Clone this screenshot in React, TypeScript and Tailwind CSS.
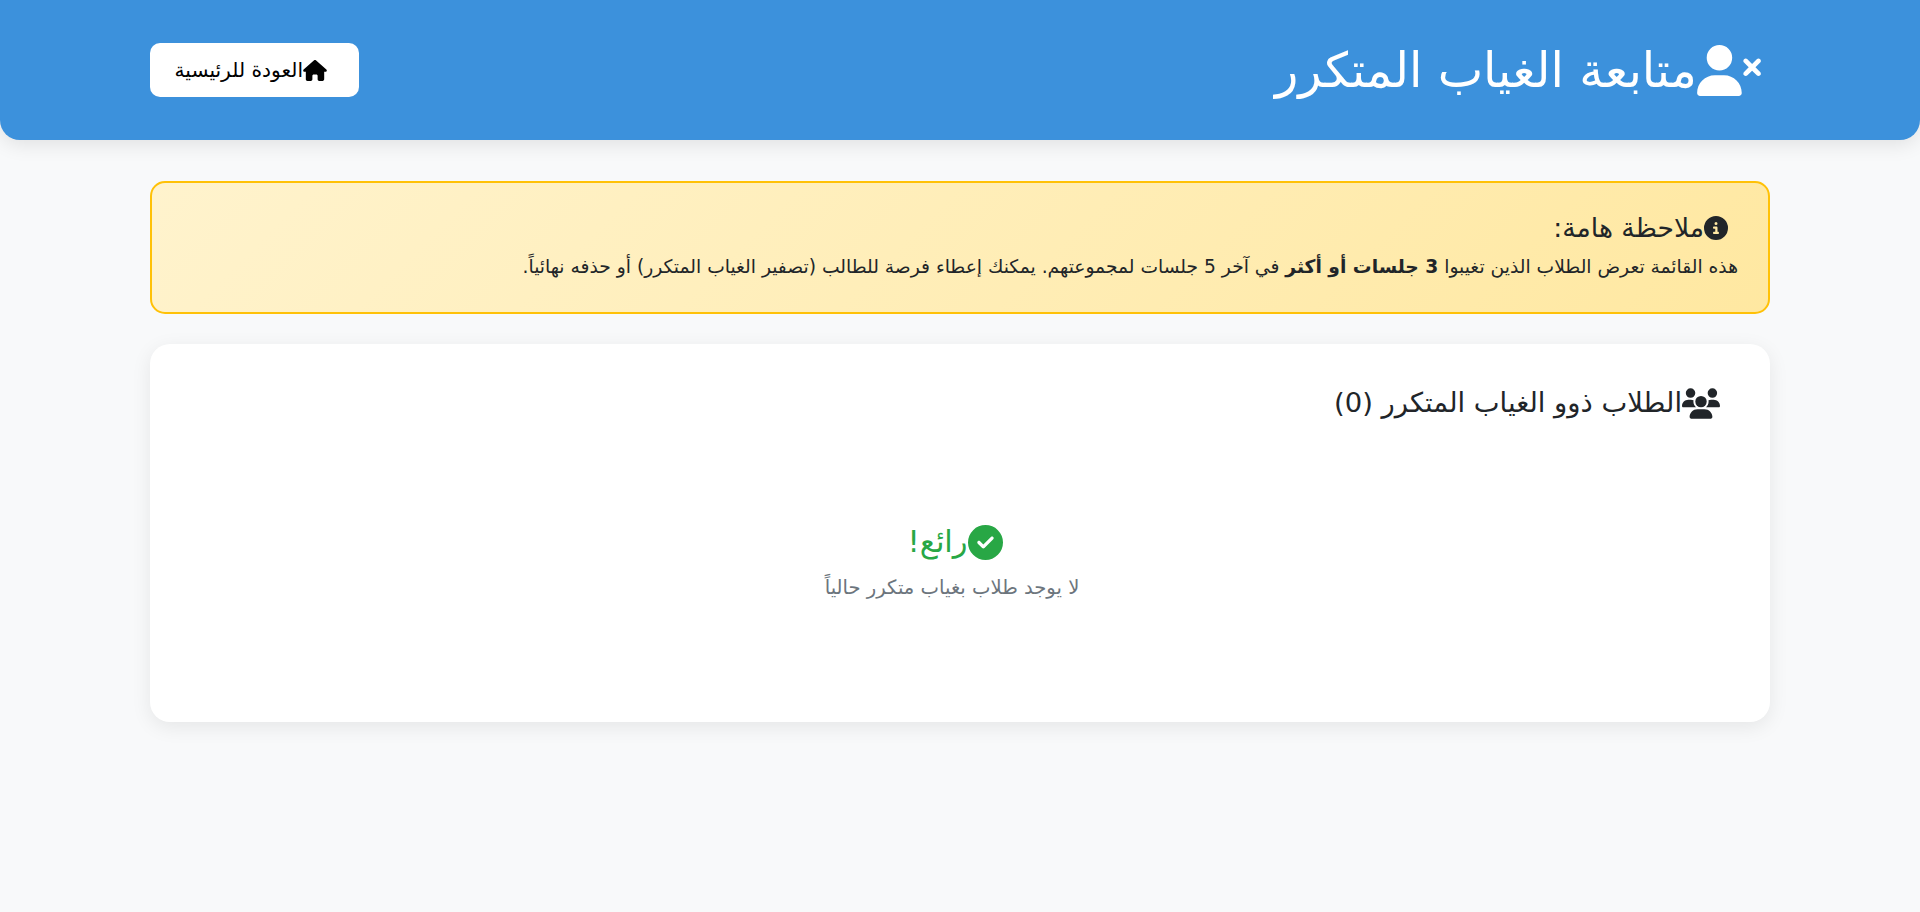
import React from 'react';
import { FaCircleCheck, FaCircleInfo, FaHouse, FaUserXmark, FaUsers } from 'react-icons/fa6';

const App: React.FC = () => {
  return (
    <div dir="rtl" className="min-h-[912px] bg-[#f8f9fa] text-[#212529] font-['DejaVu_Sans',sans-serif]">
      <header className="h-[140px] bg-[#3c91dc] rounded-b-[20px] shadow-[0_4px_20px_rgba(0,0,0,0.1)] text-white">
        <div className="mx-[150px] h-full flex items-center justify-between">
          <h1 className="flex items-center pr-[9px] text-[48.3px] leading-[58px] font-normal">
            <FaUserXmark className="w-[64px] h-[51px] shrink-0" />
            <span>متابعة الغياب المتكرر</span>
          </h1>
          <a href="#home" className="flex items-center h-[54px] w-[209px] pr-[32px] bg-white rounded-[10px] text-black text-[20.2px]">
            <FaHouse className="w-6 h-[21px] shrink-0" />
            <span>العودة للرئيسية</span>
          </a>
        </div>
      </header>

      <main className="mx-[150px] pt-[41px]">
        <section className="h-[133px] border-2 border-[#ffc107] rounded-[15px] bg-linear-135 from-[#fff3cd] to-[#ffe8a1] px-[30px] pt-[29px]">
          <h2 className="flex items-center pr-[10px] text-[26.6px] leading-[32px] font-normal">
            <FaCircleInfo className="w-6 h-6 shrink-0" />
            <span>ملاحظة هامة:</span>
          </h2>
          <p className="mt-[11px] text-[18.7px] leading-[24px]">
            هذه القائمة تعرض الطلاب الذين تغيبوا <strong>3 جلسات أو أكثر</strong> في آخر 5 جلسات لمجموعتهم. يمكنك إعطاء فرصة للطالب (تصفير الغياب المتكرر) أو حذفه نهائياً.
          </p>
        </section>

        <section className="mt-[30px] h-[378px] bg-white rounded-[20px] shadow-[0_5px_20px_rgba(0,0,0,0.08)] px-[50px] pt-[41px]">
          <h2 className="flex items-center text-[27.4px] leading-[36px] font-normal">
            <FaUsers className="w-[38px] h-[31px] shrink-0" />
            <span>الطلاب ذوو الغياب المتكرر (0)</span>
          </h2>
          <div className="mt-[102px] pr-2.5 flex flex-col items-center">
            <h3 className="flex items-center text-[#28a745] text-[30.5px] leading-[38px] font-normal">
              <FaCircleCheck className="w-[35px] h-[35px] shrink-0" />
              <span>رائع!</span>
            </h3>
            <p className="mt-[15px] pr-1.5 text-[19.6px] leading-[24px] text-[#6c757d]">لا يوجد طلاب بغياب متكرر حالياً</p>
          </div>
        </section>
      </main>
    </div>
  );
};

export default App;
